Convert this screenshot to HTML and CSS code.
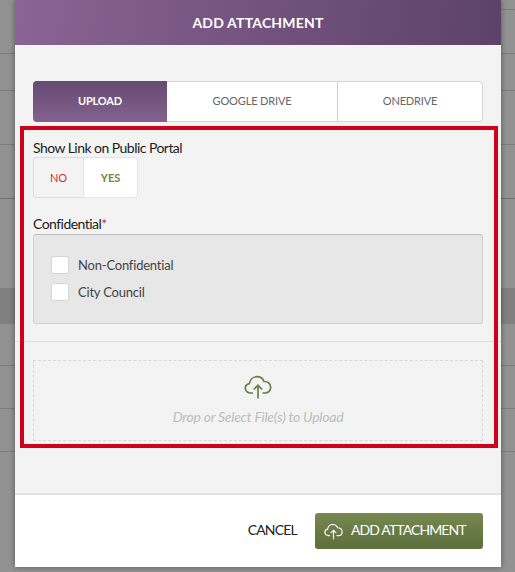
FILE: index.html
```html
<!DOCTYPE html>
<html lang="en">
<head>
<meta charset="utf-8">
<title>Add Attachment</title>
<link rel="stylesheet" href="styles.css">
</head>
<body>
<div class="backdrop">
  <div class="row r1"></div>
  <div class="row r2"></div>
  <div class="row r3"></div>
  <div class="row r4"></div>
  <div class="row r5"></div>
  <div class="row r6"></div>
  <div class="row r7"></div>
  <div class="row r8"></div>
  <div class="row r9"></div>
</div>
<main class="modal">
  <header class="modal-head">ADD ATTACHMENT</header>
  <section class="modal-body">
    <div class="tabs">
      <div class="tab tab-active">UPLOAD</div>
      <div class="tab tab-google">GOOGLE DRIVE</div>
      <div class="tab tab-one">ONEDRIVE</div>
    </div>
    <div class="highlight">
      <div class="label">Show Link on Public Portal</div>
      <div class="toggle">
        <div class="toggle-no">NO</div>
        <div class="toggle-yes">YES</div>
      </div>
      <div class="label label-conf">Confidential<span class="req">*</span></div>
      <div class="options">
        <label class="option"><span class="box"></span>Non-Confidential</label>
        <label class="option"><span class="box"></span>City Council</label>
      </div>
      <div class="divider"></div>
      <div class="drop">
        <svg class="drop-icon" viewBox="0 0 28 24" fill="none" stroke="currentColor" stroke-width="1.7">
          <path d="M9 18H6.500C3.600 18 1.300 15.900 1.300 13.200C1.300 10.800 3 9 5.300 8.600C6 4.600 9.200 1.700 13 1.700C16.200 1.700 18.800 3.500 20 6.500C23.800 6.300 26.700 8.800 26.700 12.200C26.700 15.500 24.200 18 21 18H18.500"/>
          <path d="M14 23.500V10.500M9.800 14.500L14 10.300L18.200 14.500"/>
        </svg>
        <div class="drop-text">Drop or Select File(s) to Upload</div>
      </div>
    </div>
  </section>
  <footer class="modal-foot">
    <span class="cancel">CANCEL</span>
    <div class="add">
      <svg class="add-icon" viewBox="0 0 28 24" fill="none" stroke="currentColor" stroke-width="1.7">
        <path d="M9 18H6.500C3.600 18 1.300 15.900 1.300 13.200C1.300 10.800 3 9 5.300 8.600C6 4.600 9.200 1.700 13 1.700C16.200 1.700 18.800 3.500 20 6.500C23.800 6.300 26.700 8.800 26.700 12.200C26.700 15.500 24.200 18 21 18H18.500"/>
        <path d="M14 23.500V10.500M9.800 14.500L14 10.300L18.200 14.500"/>
      </svg>
      <span class="add-text">ADD ATTACHMENT</span>
    </div>
  </footer>
</main>
</body>
</html>
```

FILE: styles.css
```css
* { box-sizing: border-box; }
html, body { margin: 0; padding: 0; }
body {
  width: 515px;
  height: 572px;
  overflow: hidden;
  position: relative;
  background: #929292;
  font-family: Lato, "Liberation Sans", sans-serif;
}
.backdrop {
  position: absolute;
  inset: 0;
}
.row { position: absolute; left: 0; right: 0; height: 1px; background: #7e7e7e; }
.r1 { top: 9px; left: 501px; }
.r2 { top: 53px; }
.r3 { top: 90px; }
.r4 { top: 144px; }
.r5 { top: 198px; background: #6f6f6f; }
.r6 { top: 288px; height: 36px; background: #808080; }
.r7 { top: 365px; }
.r8 { top: 408px; }
.r9 { top: 451px; }
.modal {
  position: relative;
  margin-left: 15px;
  width: 486px;
  height: 567px;
  display: flex;
  flex-direction: column;
  background: #f3f3f3;
  box-shadow: 0 0 6px rgba(0, 0, 0, 0.4);
}
.modal-head {
  height: 45px;
  flex: none;
  display: flex;
  align-items: center;
  justify-content: center;
  color: #fff;
  font-weight: 700;
  font-size: 14px;
  letter-spacing: 0.2px;
  background: linear-gradient(100deg, #8a6495 0%, #5c4268 100%);
}
.modal-body {
  flex: 1;
  padding: 36px 3px 0 5px;
  border-bottom: 2px solid #e2e2e2;
}
.tabs {
  margin: 0 15px 0 13px;
  height: 41px;
  display: flex;
  background: #fff;
  border: 1px solid #d4d4d4;
  border-radius: 4px;
  font-size: 11px;
  letter-spacing: -0.15px;
  color: #666;
}
.tab { display: flex; align-items: center; justify-content: center; padding-bottom: 2px; }
.tab-active {
  width: 134px;
  margin: -1px 0 -1px -1px;
  border-radius: 4px 0 0 4px;
  color: #fff;
  font-weight: 700;
  background: linear-gradient(0deg, #85608f 0%, #654b72 100%);
}
.tab-google { width: 171px; border-right: 1px solid #cfcfcf; }
.tab-one { flex: 1; }
.highlight {
  position: relative;
  height: 322px;
  margin-top: 4px;
  padding: 14px 0 0 13px;
}
.highlight::after {
  content: "";
  position: absolute;
  inset: 0;
  border: 4px solid #d0021b;
  pointer-events: none;
}
.label {
  font-size: 14px;
  line-height: 15px;
  letter-spacing: -0.54px;
  color: #222;
}
.toggle {
  margin-top: 2px;
  width: 105px;
  height: 41px;
  display: flex;
  font-size: 11px;
}
.toggle-no {
  width: 50px;
  display: flex;
  align-items: center;
  justify-content: center;
  color: #c8303f;
  border: 1px solid #dcdcdc;
  border-right: 0;
  border-radius: 4px 0 0 4px;
}
.toggle-yes {
  flex: 1;
  display: flex;
  align-items: center;
  justify-content: center;
  color: #6f8549;
  font-weight: 700;
  background: #fff;
  border: 1px solid #e4e4e4;
  border-radius: 0 4px 4px 0;
}
.label-conf { margin-top: 18px; }
.req { color: #c8303f; }
.options {
  margin: 3px 15px 0 0;
  height: 90px;
  padding: 21px 0 0 17px;
  display: flex;
  flex-direction: column;
  gap: 9px;
  background: #e7e7e7;
  border: 1px solid #d0d0d0;
  border-top-color: #bdbdbd;
  border-radius: 3px;
}
.option {
  display: flex;
  align-items: center;
  height: 18px;
  font-size: 13px;
  letter-spacing: -0.2px;
  color: #444;
}
.box {
  width: 18px;
  height: 18px;
  margin-right: 9px;
  background: #fff;
  border: 1px solid #d5d5d5;
  border-radius: 3px;
}
.divider {
  margin: 17px -3px 0 -18px;
  height: 1px;
  background: #dedede;
}
.drop {
  margin: 18px 15px 0 0;
  height: 81px;
  border: 1px dashed #d8d8d8;
  display: flex;
  flex-direction: column;
  align-items: center;
  padding-top: 14px;
}
.drop-icon { width: 28px; height: 24px; color: #6a7f45; }
.drop-text {
  margin-top: 9px;
  font-size: 14px;
  font-style: italic;
  letter-spacing: -0.25px;
  color: #bdbdbd;
}
.modal-foot {
  height: 72px;
  flex: none;
  padding: 0 18px 0 0;
  background: #fff;
  display: flex;
  align-items: center;
  justify-content: flex-end;
}
.cancel { font-size: 14px; letter-spacing: -0.8px; color: #222; margin: 0 18px 3px 0; }
.add {
  width: 168px;
  height: 36px;
  display: flex;
  align-items: center;
  padding-left: 9px;
  gap: 8px;
  color: #fff;
  font-size: 14px;
  letter-spacing: -0.9px;
  border-radius: 3px;
  background: linear-gradient(180deg, #77894f 0%, #5b6e3c 100%);
}
.add-text { margin-bottom: 3px; }
.add-icon { width: 19px; height: 17px; flex: none; }
```
